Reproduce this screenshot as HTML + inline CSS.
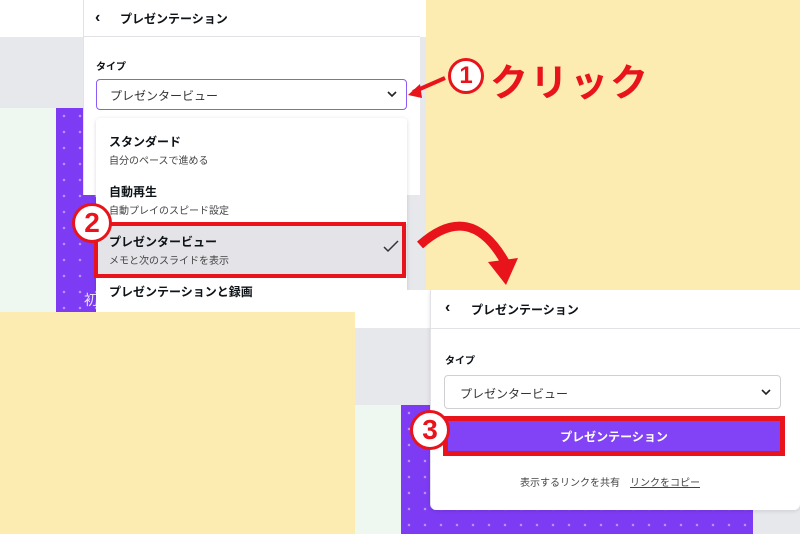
<!DOCTYPE html>
<html><head><meta charset="utf-8"><style>
*{margin:0;padding:0;box-sizing:border-box}
body{width:800px;height:534px;overflow:hidden;background:#fdecb2;font-family:"Liberation Sans","Noto Sans CJK JP",sans-serif;position:relative;color:#0e1318}
.a{position:absolute}
.b{font-weight:700}
.dots{background-image:radial-gradient(circle,rgba(255,255,255,.45) 1px,transparent 1.5px);background-size:16px 16px}
</style></head><body>
<!-- left screenshot -->
<div class="a" style="left:0;top:0;width:426px;height:312px;background:#e7e8ec;overflow:hidden">
 <div class="a" style="left:0;top:0;width:426px;height:37px;background:#fff"></div>
 <div class="a" style="left:0;top:108px;width:56px;height:210px;background:#eef7f0"></div>
 <div class="a dots" style="left:56px;top:108px;width:300px;height:210px;background-color:#7d3cf3"></div>
 <div class="a" style="left:84px;top:290px;color:#fff;font-size:14px;opacity:.85">初心者から上級者まで</div>
 <div class="a" style="left:83px;top:0;width:337px;height:195px;background:#fff;border-left:1px solid #e2e2e6"></div>
 <div class="a" style="left:83px;top:36px;width:337px;height:1px;background:#e2e2e6"></div>
 <div class="a b" style="left:95px;top:9px;font-size:16px">&#8249;</div>
 <div class="a b" style="left:120px;top:10px;font-size:12px">プレゼンテーション</div>
 <div class="a b" style="left:96px;top:58px;font-size:10px">タイプ</div>
 <div class="a" style="left:96px;top:79px;width:311px;height:31px;border:1px solid #8b5cf6;border-radius:4px;background:#fff"></div>
 <div class="a" style="left:110px;top:87px;font-size:12px;color:#333">プレゼンタービュー</div>
 <svg class="a" style="left:387px;top:90px" width="10" height="8"><path d="M1 2l4 4 4-4" stroke="#222" stroke-width="1.6" fill="none"/></svg>
 <div class="a" style="left:96px;top:118px;width:311px;height:200px;background:#fff;box-shadow:0 1px 4px rgba(0,0,0,.15);border-radius:4px"></div>
 <div class="a b" style="left:109px;top:133px;font-size:12px">スタンダード</div>
 <div class="a" style="left:109px;top:152px;font-size:10px;color:#444">自分のペースで進める</div>
 <div class="a b" style="left:109px;top:183px;font-size:12px">自動再生</div>
 <div class="a" style="left:109px;top:202px;font-size:10px;color:#444">自動プレイのスピード設定</div>
 <div class="a" style="left:96px;top:224px;width:311px;height:52px;background:#e3e3e8"></div>
 <div class="a b" style="left:109px;top:233px;font-size:12px">プレゼンタービュー</div>
 <div class="a" style="left:109px;top:252px;font-size:10px;color:#444">メモと次のスライドを表示</div>
 <svg class="a" style="left:382px;top:240px" width="18" height="14"><path d="M2 7l4 4 10-10" stroke="#333" stroke-width="1.5" fill="none"/></svg>
 <div class="a b" style="left:109px;top:283px;font-size:12px">プレゼンテーションと録画</div>
 <div class="a" style="left:94px;top:222px;width:312px;height:56px;border:4px solid #e8131b"></div>
</div>
<!-- circle 2 -->
<div class="a b" style="left:72px;top:203px;width:40px;height:40px;border-radius:50%;background:#fff;border:3px solid #e8131b;color:#e8131b;font-size:28px;line-height:33px;text-align:center">2</div>
<!-- click label -->
<div class="a b" style="left:448px;top:58px;width:36px;height:36px;border-radius:50%;background:#fff;border:3px solid #e8131b;color:#e8131b;font-size:24px;line-height:29px;text-align:center">1</div>
<div class="a b" style="left:490px;top:52px;font-size:38px;color:#e8131b;letter-spacing:2px">クリック</div>
<svg class="a" style="left:0;top:0" width="800" height="534">
 <path d="M445 78 L413 92" stroke="#e8131b" stroke-width="4" fill="none"/>
 <path d="M408 95 L420 84 L422 98 Z" fill="#e8131b"/>
 <path d="M420 245 Q470 200 505 262" stroke="#e8131b" stroke-width="9" fill="none"/>
 <path d="M488 262 L518 258 L506 285 Z" fill="#e8131b"/>
</svg>
<!-- right screenshot -->
<div class="a" style="left:355px;top:290px;width:445px;height:244px;background:#e7e8ec;overflow:hidden">
 <div class="a" style="left:0;top:0;width:445px;height:38px;background:#fff"></div>
 <div class="a" style="left:0;top:115px;width:46px;height:140px;background:#eef7f0"></div>
 <div class="a dots" style="left:46px;top:115px;width:352px;height:140px;background-color:#7d3cf3"></div>
 <div class="a" style="left:75px;top:0;width:370px;height:220px;background:#fff;border-left:1px solid #e2e2e6;box-shadow:0 1px 4px rgba(0,0,0,.12);border-radius:0 0 6px 6px"></div>
 <div class="a" style="left:75px;top:38px;width:370px;height:1px;background:#e2e2e6"></div>
 <div class="a b" style="left:90px;top:9px;font-size:16px">&#8249;</div>
 <div class="a b" style="left:116px;top:11px;font-size:12px">プレゼンテーション</div>
 <div class="a b" style="left:90px;top:62px;font-size:10px">タイプ</div>
 <div class="a" style="left:89px;top:85px;width:337px;height:34px;border:1px solid #cfd0d4;border-radius:4px;background:#fff"></div>
 <div class="a" style="left:105px;top:95px;font-size:12px;color:#333">プレゼンタービュー</div>
 <svg class="a" style="left:406px;top:98px" width="10" height="8"><path d="M1 2l4 4 4-4" stroke="#222" stroke-width="1.6" fill="none"/></svg>
 <div class="a" style="left:88px;top:126px;width:342px;height:40px;background:#8143f5;border:5px solid #e8131b"></div>
 <div class="a b" style="left:88px;top:138px;width:342px;text-align:center;color:#fff;font-size:12px">プレゼンテーション</div>
 <div class="a" style="left:165px;top:184px;font-size:10px;color:#444">表示するリンクを共有　<span style="text-decoration:underline">リンクをコピー</span></div>
</div>
<div class="a b" style="left:410px;top:410px;width:40px;height:40px;border-radius:50%;background:#fff;border:3px solid #e8131b;color:#e8131b;font-size:28px;line-height:33px;text-align:center">3</div>
</body></html>
